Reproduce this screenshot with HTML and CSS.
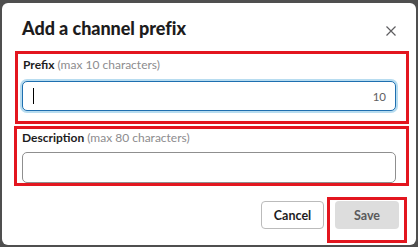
FILE: index.html
```html
<!DOCTYPE html>
<html>
<head>
<meta charset="utf-8">
<link rel="stylesheet" href="styles.css">
</head>
<body>
<div class="modal">
  <div class="header">
    <h1 class="title">Add a channel prefix</h1>
    <button class="close" aria-label="Close">
      <svg width="10" height="10" viewBox="0 0 10 10"><path d="M0.5 0.5L9.5 9.5M9.5 0.5L0.5 9.5" stroke="#5e5d60" stroke-width="1.2" fill="none"/></svg>
    </button>
  </div>
  <div class="box box-prefix">
    <div class="label"><b>Prefix</b> <span class="hint">(max 10 characters)</span></div>
    <div class="input focused"><span class="caret"></span><span class="count">10</span></div>
  </div>
  <div class="box box-desc">
    <div class="label"><b>Description</b> <span class="hint">(max 80 characters)</span></div>
    <div class="input plain"></div>
  </div>
  <div class="footer">
    <button class="btn cancel">Cancel</button>
    <div class="save-box"><button class="btn save">Save</button></div>
  </div>
</div>
</body>
</html>
```

FILE: styles.css
```css
html, body { margin: 0; padding: 0; }
body {
  background: #4f4f4f;
  width: 418px;
  height: 247px;
  padding: 3px 0 0 2px;
  box-sizing: border-box;
  font-family: Lato, "Noto Sans", sans-serif;
  color: #1d1c1d;
}
.modal {
  width: 414px;
  height: 242px;
  background: #fff;
  border-radius: 6px;
  box-sizing: border-box;
  display: flex;
  flex-direction: column;
}
.header {
  display: flex;
  align-items: flex-start;
  justify-content: space-between;
  height: 48px;
  padding: 15px 20px 0 20px;
  box-sizing: border-box;
}
.title {
  margin: 0;
  font-size: 18px;
  font-weight: 900;
  line-height: 21px;
  letter-spacing: -0.05px;
}
.close {
  border: 0;
  background: none;
  padding: 0;
  margin: 8px 0 0 0;
  width: 10px;
  height: 10px;
  display: flex;
}
.box {
  border: 3px solid #e3161f;
  box-sizing: border-box;
}
.box-prefix {
  margin-left: 13px;
  width: 394px;
  height: 73px;
  padding: 5px 10px 0 4px;
}
.box-desc {
  margin-left: 12px;
  margin-top: 2px;
  width: 395px;
  height: 60px;
  padding: 3px 10px 0 4px;
}
.label {
  font-size: 12px;
  line-height: 12px;
  padding-left: 1px;
  white-space: nowrap;
}
.label b { font-weight: 700; }
.hint { color: #8d8c8e; }
.input {
  box-sizing: border-box;
  border-radius: 5px;
  background: #fff;
}
.focused {
  margin-top: 10px;
  height: 30px;
  border: 1px solid #1e6fb0;
  box-shadow: 0 0 0 2px #b7dcf0;
  display: flex;
  align-items: center;
  justify-content: space-between;
  padding: 0 9px 0 10px;
}
.caret {
  width: 1px;
  height: 16px;
  background: #000;
}
.count {
  font-size: 11.5px;
  color: #616061;
}
.plain {
  margin-top: 8px;
  height: 31px;
  border: 1px solid #8f8f8f;
  margin-left: 1px;
}
.footer {
  display: flex;
  justify-content: flex-end;
  align-items: flex-start;
  padding: 11px 9px 0 0;
}
.btn {
  font-family: Lato, "Noto Sans", sans-serif;
  font-weight: 700;
  font-size: 12.5px;
  height: 28px;
  border-radius: 4px;
  box-sizing: border-box;
  color: #1d1c1d;
  padding: 0;
}
.cancel {
  width: 63px;
  background: #fff;
  border: 1px solid #bbbbbb;
  margin-top: 4px;
  margin-right: 3px;
}
.save-box {
  width: 80px;
  height: 46px;
  border: 3px solid #e3161f;
  box-sizing: border-box;
  padding: 1px 5px 0 5px;
}
.save {
  width: 64px;
  background: #dddddd;
  border: 0;
  color: #5a595b;
}
```
